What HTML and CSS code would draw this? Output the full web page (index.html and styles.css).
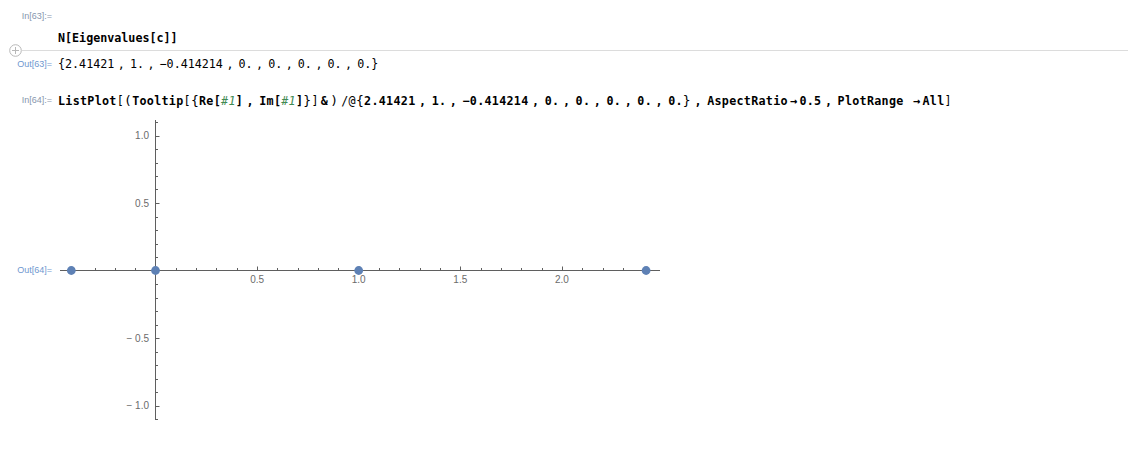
FILE: index.html
```html
<!DOCTYPE html>
<html>
<head>
<meta charset="utf-8">
<link rel="stylesheet" href="styles.css">
</head>
<body>
<div class="nb">
  <div class="row r-a">
    <div class="label lin">In[63]:=</div>
    <div class="code"></div>
  </div>
  <div class="row r-b">
    <div class="label"></div>
    <div class="code bold">N[Eigenvalues[c]]</div>
  </div>
  <div class="sep">
    <span class="plus"><svg width="13" height="13" viewBox="0 0 13 13"><circle cx="6.5" cy="6.5" r="5.8" fill="#fff" stroke="#b8b8b8" stroke-width="1"/><path d="M6.5 3v7M3 6.5h7" stroke="#b8b8b8" stroke-width="1"/></svg></span>
  </div>
  <div class="row r-c">
    <div class="label lout">Out[63]=</div>
    <div class="code">{2.41421<span class="cm">,</span> 1.<span class="cm">,</span> −0.414214<span class="cm">,</span> 0.<span class="cm">,</span> 0.<span class="cm">,</span> 0.<span class="cm">,</span> 0.<span class="cm">,</span> 0.}</div>
  </div>
  <div class="row r-d">
    <div class="label lin">In[64]:=</div>
    <div class="code bold wide">ListPlot<span class="br">[</span><span class="pr">(</span>Tooltip<span class="br">[</span><span class="cb">{</span>Re[<span class="slot">#1</span>]<span class="cm">,</span> Im[<span class="slot">#1</span>]<span class="cb">}</span><span class="br">]</span><span class="amp">&amp;</span><span class="pr">)</span><span class="map">/@</span><span class="cb">{</span>2.41421<span class="cm">,</span> 1.<span class="cm">,</span> −0.414214<span class="cm">,</span> 0.<span class="cm">,</span> 0.<span class="cm">,</span> 0.<span class="cm">,</span> 0.<span class="cm">,</span> 0.<span class="cb">}</span><span class="cm">,</span> AspectRatio<span class="ar">→</span>0.5<span class="cm">,</span> PlotRange <span class="ar">→</span>All<span class="br">]</span></div>
  </div>
  <div class="row r-plot">
    <div class="label lout">Out[64]=</div>
    <svg class="plot" width="604" height="304" viewBox="0 0 604 304">
      <g stroke="#5f5f5f" stroke-width="1" fill="none">
        <path d="M2 152.5H602"/>
        <path d="M97.5 2V302"/>
      </g>
      <g id="xticks" stroke="#5f5f5f" stroke-width="1"></g>
      <g id="yticks" stroke="#5f5f5f" stroke-width="1"></g>
      <g font-family="Liberation Sans, Arial, sans-serif" font-size="10" fill="#6b6b6b">
        <text x="199.1" y="165" text-anchor="middle">0.5</text>
        <text x="300.7" y="165" text-anchor="middle">1.0</text>
        <text x="402.3" y="165" text-anchor="middle">1.5</text>
        <text x="503.9" y="165" text-anchor="middle">2.0</text>
        <text x="91" y="21" text-anchor="end">1.0</text>
        <text x="91" y="88.5" text-anchor="end">0.5</text>
        <text x="91" y="223.5" text-anchor="end">− 0.5</text>
        <text x="91" y="291" text-anchor="end">− 1.0</text>
      </g>
      <g fill="#5e81b5">
        <circle cx="13.3" cy="152.5" r="4.4"/>
        <circle cx="97.5" cy="152.5" r="4.4"/>
        <circle cx="300.7" cy="152.5" r="4.4"/>
        <circle cx="588.1" cy="152.5" r="4.4"/>
      </g>
    </svg>
  </div>
</div>
<script>
(function(){
  var ns="http://www.w3.org/2000/svg";
  var xg=document.getElementById("xticks"), yg=document.getElementById("yticks");
  var ox=97.5, oy=152.5, sx=203.2, sy=135;
  function line(g,x1,y1,x2,y2){var l=document.createElementNS(ns,"line");l.setAttribute("x1",x1);l.setAttribute("y1",y1);l.setAttribute("x2",x2);l.setAttribute("y2",y2);g.appendChild(l);}
  for(var i=-4;i<=24;i++){ if(i===0) continue; var x=Math.round(ox+i*0.1*sx)+0.5; var major=(i%5===0); line(xg,x,oy,x,oy-(major?4:2.5)); }
  for(var j=-11;j<=11;j++){ if(j===0) continue; var y=Math.round(oy-j*0.1*sy)+0.5; var major=(j%5===0); line(yg,ox,y,ox+(major?4:2.5),y); }
})();
</script>
</body>
</html>
```

FILE: styles.css
```css
html, body {
  margin: 0;
  padding: 0;
  background: #ffffff;
}
.nb {
  padding-top: 8px;
}
.row {
  display: flex;
  align-items: center;
  height: 16px;
}
.label {
  width: 52px;
  flex: none;
  margin-right: 6px;
  text-align: right;
  font-family: "Liberation Sans", Arial, sans-serif;
  font-size: 9px;
  white-space: nowrap;
}
.lin { color: #8796ae; }
.lout { color: #6f98cf; }
.code {
  font-family: "DejaVu Sans Mono", monospace;
  font-size: 11.7px;
  color: #000;
  white-space: nowrap;
}
.bold { font-weight: bold; }
.wide { letter-spacing: 0.3px; }
.r-b { margin-top: 6px; }
.sep {
  position: relative;
  margin-top: 4px;
  margin-left: 22px;
  height: 1px;
  background: #dcdcdc;
}
.plus {
  position: absolute;
  left: -13px;
  top: -6px;
  width: 13px;
  height: 13px;
  display: block;
}
.plus svg { display: block; }
.r-c { margin-top: 5px; }
.r-d { margin-top: 20px; }
.cm { margin-left: 3.5px; margin-right: -2px; }
.slot { color: #3f8a52; font-style: italic; font-weight: normal; }
.br { font-weight: normal; }
.pr { font-weight: normal; font-size: 13px; }
.cb { font-weight: normal; font-size: 13px; }
.amp { margin: 0 2px; }
.map { font-weight: normal; margin-left: 3px; }
.ar { font-weight: bold; font-size: 12px; margin: 0 2px; }
.r-plot {
  margin-top: 10px;
  height: 304px;
  align-items: center;
}
.plot { display: block; }
```
